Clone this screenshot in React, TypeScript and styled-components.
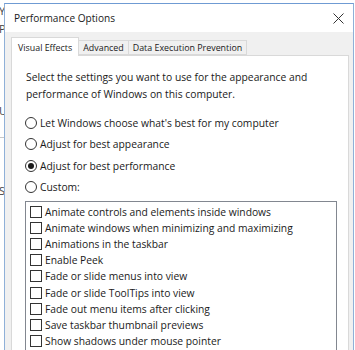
import React, { useState } from "react"
import styled, { createGlobalStyle } from "styled-components"

const GlobalStyle = createGlobalStyle`
  html, body {
    margin: 0;
    padding: 0;
    background: #ffffff;
    overflow: hidden;
  }
  * {
    box-sizing: border-box;
  }
`

const Desktop = styled.div`
  position: relative;
  width: 355px;
  height: 350px;
  overflow: hidden;
  background: #ffffff;
  font-family: "Open Sans", "Noto Sans", sans-serif;
  color: #1a1a1a;
`

const Backdrop = styled.div`
  display: flex;
  flex-direction: column;
  font-size: 11px;
  color: #444;
`

const BackLetter = styled.span<{ $top: number }>`
  margin-top: ${(p) => p.$top}px;
  line-height: 12px;
  margin-left: -1px;
`

const BackRule = styled.div<{ $top: number }>`
  margin-top: ${(p) => p.$top}px;
  width: 4px;
  height: 1px;
  background: #c8c8c8;
`

const Dialog = styled.div`
  position: absolute;
  left: 4px;
  top: 3px;
  width: 350px;
  height: 360px;
  display: flex;
  flex-direction: column;
  border: 1px solid #8fb0d8;
  border-top-color: #6f9bd3;
  background: #f0f0f0;
`

const TitleBar = styled.div`
  height: 28px;
  flex-shrink: 0;
  display: flex;
  align-items: center;
  justify-content: space-between;
  padding: 0 8px 0 9px;
  background: #ffffff;
  font-size: 10.1px;
  color: #1a1a1a;
`

const CloseButton = styled.button`
  width: 14px;
  height: 14px;
  padding: 0;
  border: none;
  background: transparent;
  display: flex;
  align-items: center;
  justify-content: center;
  cursor: pointer;
`

const Body = styled.div`
  flex: 1;
  display: flex;
  flex-direction: column;
  padding: 5px 4px 0 6px;
`

const TabRow = styled.div`
  display: flex;
  align-items: flex-end;
  height: 18px;
`

const Tab = styled.div<{ $active?: boolean }>`
  height: ${(p) => (p.$active ? 19 : 15)}px;
  margin-bottom: ${(p) => (p.$active ? -1 : 0)}px;
  padding: 0 ${(p) => (p.$active ? 6 : 4)}px;
  display: flex;
  align-items: center;
  border: 1px solid #d9d9d9;
  border-bottom: ${(p) => (p.$active ? "none" : "1px solid #d9d9d9")};
  border-left: ${(p) => (p.$active ? "1px solid #d9d9d9" : "none")};
  background: ${(p) => (p.$active ? "#ffffff" : "#f0f0f0")};
  font-size: 8.9px;
  color: #1a1a1a;
  position: relative;
  z-index: ${(p) => (p.$active ? 1 : 0)};
  white-space: nowrap;
`

const Panel = styled.div`
  flex: 1;
  background: #ffffff;
  border: 1px solid #d9d9d9;
  padding: 13px 13px 0 13px;
  display: flex;
  flex-direction: column;
`

const Description = styled.p`
  margin: 0 0 0 1px;
  font-size: 10.3px;
  line-height: 17px;
  color: #1a1a1a;
`

const RadioGroup = styled.div`
  display: flex;
  flex-direction: column;
  margin-top: 9px;
`

const RadioRow = styled.label`
  display: flex;
  align-items: center;
  gap: 3px;
  height: 21.5px;
  font-size: 10.3px;
  cursor: default;
`

const RadioCircle = styled.span<{ $checked?: boolean }>`
  width: 12px;
  height: 12px;
  border-radius: 50%;
  border: 1px solid #333333;
  display: flex;
  align-items: center;
  justify-content: center;
  background: #ffffff;
  &::after {
    content: "";
    width: 6px;
    height: 6px;
    border-radius: 50%;
    background: ${(p) => (p.$checked ? "#1a1a1a" : "transparent")};
  }
`

const ListBox = styled.div`
  margin-top: 3px;
  width: 312px;
  flex: 1;
  border: 1px solid #828790;
  border-bottom: none;
  padding: 2px 0 0 4px;
  display: flex;
  flex-direction: column;
`

const CheckRow = styled.label`
  display: flex;
  align-items: center;
  gap: 3px;
  height: 16.1px;
  flex-shrink: 0;
  font-size: 10.3px;
  white-space: nowrap;
  cursor: default;
`

const CheckBox = styled.span`
  width: 12px;
  height: 12px;
  border: 1px solid #333333;
  background: #ffffff;
  flex-shrink: 0;
`

const options = [
  "Let Windows choose what's best for my computer",
  "Adjust for best appearance",
  "Adjust for best performance",
  "Custom:",
]

const effects = [
  "Animate controls and elements inside windows",
  "Animate windows when minimizing and maximizing",
  "Animations in the taskbar",
  "Enable Peek",
  "Fade or slide menus into view",
  "Fade or slide ToolTips into view",
  "Fade out menu items after clicking",
  "Save taskbar thumbnail previews",
  "Show shadows under mouse pointer",
]

export default function App() {
  const [choice, setChoice] = useState(2)
  return (
    <>
      <GlobalStyle />
      <Desktop>
        <Backdrop>
          <BackLetter $top={5}>Y</BackLetter>
          <BackLetter $top={6}>P</BackLetter>
          <BackLetter $top={70}>U</BackLetter>
          <BackRule $top={20} />
          <BackLetter $top={47}>S</BackLetter>
        </Backdrop>

        <Dialog>
          <TitleBar>
            <span>Performance Options</span>
            <CloseButton aria-label="Close">
              <svg width="11" height="11" viewBox="0 0 11 11">
                <path d="M0.5 0.5 L10.5 10.5 M10.5 0.5 L0.5 10.5" stroke="#333" strokeWidth="1" />
              </svg>
            </CloseButton>
          </TitleBar>

          <Body>
            <TabRow>
              <Tab $active>Visual Effects</Tab>
              <Tab>Advanced</Tab>
              <Tab>Data Execution Prevention</Tab>
            </TabRow>

            <Panel>
              <Description>
                Select the settings you want to use for the appearance and
                performance of Windows on this computer.
              </Description>

              <RadioGroup>
                {options.map((o, i) => (
                  <RadioRow key={o} onClick={() => setChoice(i)}>
                    <RadioCircle $checked={choice === i} />
                    {o}
                  </RadioRow>
                ))}
              </RadioGroup>

              <ListBox>
                {effects.map((e) => (
                  <CheckRow key={e}>
                    <CheckBox />
                    {e}
                  </CheckRow>
                ))}
              </ListBox>
            </Panel>
          </Body>
        </Dialog>
      </Desktop>
    </>
  )
}
